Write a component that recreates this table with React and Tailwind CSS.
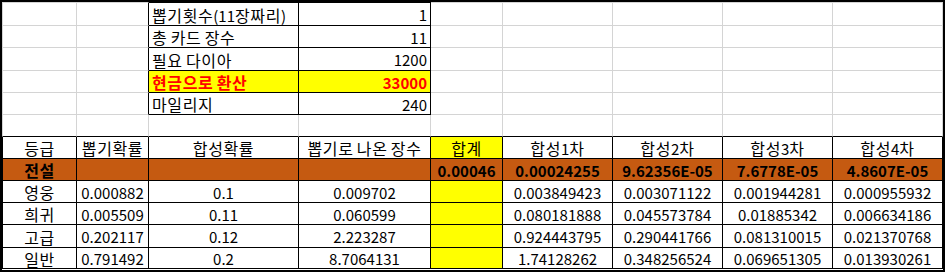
import React from 'react';

// column and row sizes taken from the sheet (px, borders included)
const rows = [
  ['', '', { t: '뽑기횟수(11장짜리)', a: 'l' }, { t: '1', a: 'r' }, '', '', '', '', ''],
  ['', '', { t: '총 카드 장수', a: 'l' }, { t: '11', a: 'r' }, '', '', '', '', ''],
  ['', '', { t: '필요 다이아', a: 'l' }, { t: '1200', a: 'r' }, '', '', '', '', ''],
  ['', '', { t: '현금으로 환산', a: 'l', hl: true }, { t: '33000', a: 'r', hl: true }, '', '', '', '', ''],
  ['', '', { t: '마일리지', a: 'l' }, { t: '240', a: 'r' }, '', '', '', '', ''],
  ['', '', '', '', '', '', '', '', ''],
  ['등급', '뽑기확률', '합성확률', '뽑기로 나온 장수', { t: '합계', y: true }, '합성1차', '합성2차', '합성3차', '합성4차'],
  ['전설', '', '', '', '0.00046', '0.00024255', '9.62356E-05', '7.6778E-05', '4.8607E-05'],
  ['영웅', '0.000882', '0.1', '0.009702', { t: '', y: true }, '0.003849423', '0.003071122', '0.001944281', '0.000955932'],
  ['희귀', '0.005509', '0.11', '0.060599', { t: '', y: true }, '0.080181888', '0.045573784', '0.01885342', '0.006634186'],
  ['고급', '0.202117', '0.12', '2.223287', { t: '', y: true }, '0.924443795', '0.290441766', '0.081310015', '0.021370768'],
  ['일반', '0.791492', '0.2', '8.7064131', { t: '', y: true }, '1.74128262', '0.348256524', '0.069651305', '0.013930261'],
];

// hangul runs are set a bit larger so they match the sheet's font
const Text = ({ t }) =>
  t.split(/([가-힣]+)/).map((part, i) =>
    /[가-힣]/.test(part) ? (
      <span key={i} className="text-[16px] tracking-[0.6px]">{part}</span>
    ) : (
      <span key={i}>{part}</span>
    )
  );

const Cell = ({ r, c, v }) => {
  const d = typeof v === 'string' ? { t: v } : v;
  const lower = r >= 6;
  const box = !lower && r < 5 && (c === 2 || c === 3);

  const rightBlack = lower || (!lower && r < 5 && c >= 1 && c <= 3);
  const bottomBlack = lower || r === 5 || box;

  let bg = 'bg-white';
  if (d.hl || d.y) bg = 'bg-[#ffff00]';
  if (r === 7) bg = 'bg-[#c55a11]';

  const align =
    d.a === 'l' ? 'justify-start pl-[3px]' : d.a === 'r' ? 'justify-end pr-[3px]' : 'justify-center';

  return (
    <div
      className={[
        'flex items-center whitespace-nowrap border-r border-b',
        rightBlack ? 'border-r-black' : 'border-r-[#d4d4d4]',
        bottomBlack ? 'border-b-black' : 'border-b-[#d4d4d4]',
        c === 0 ? (lower ? 'border-l border-l-black' : 'border-l border-l-[#d4d4d4]') : '',
        r === 0 ? (box ? 'border-t border-t-black' : 'border-t border-t-[#d4d4d4]') : '',
        bg,
        align,
        d.hl ? 'text-[#ff0000] font-bold' : 'text-black',
        r === 7 ? 'font-bold' : '',
      ].join(' ')}
    >
      <span className="pt-[1px]">
        <Text t={d.t} />
      </span>
    </div>
  );
};

export default function App() {
  return (
    <div className="w-[945px] h-[272px] bg-white border-2 border-black pb-[1px] overflow-hidden">
      <div
        className="grid grid-cols-[75px_72px_150px_132px_72px_110px_110px_110px_110px] grid-rows-[24px_22px_23px_22px_22px_22px_22px_22px_22px_22px_23px_21px] text-[15px] leading-none"
        style={{ fontFamily: '"Noto Sans CJK KR", "Noto Sans", sans-serif' }}
      >
        {rows.map((row, r) =>
          row.map((v, c) => <Cell key={`${r}-${c}`} r={r} c={c} v={v} />)
        )}
      </div>
    </div>
  );
}
